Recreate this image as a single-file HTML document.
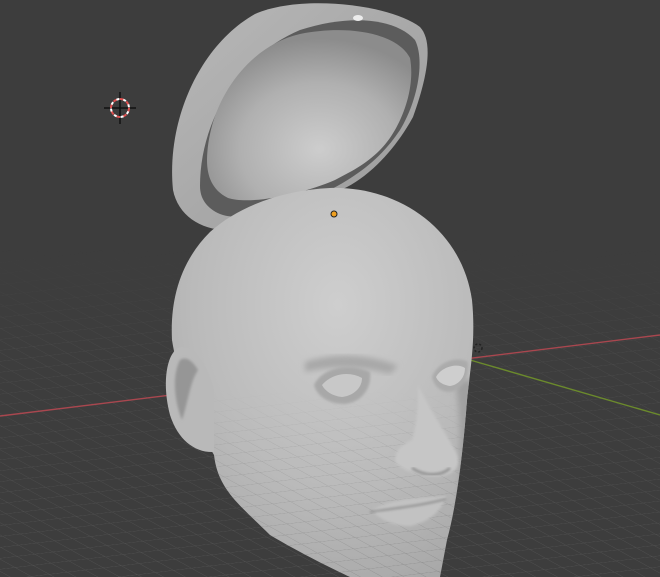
<!DOCTYPE html>
<html><head><meta charset="utf-8"><style>html,body{margin:0;padding:0;background:#3d3d3d;overflow:hidden}svg{display:block}</style></head>
<body>
<svg width="660" height="577" viewBox="0 0 660 577" xmlns="http://www.w3.org/2000/svg">
<defs>
<radialGradient id="head" cx="0.55" cy="0.3" r="0.8">
<stop offset="0" stop-color="#cecece"/><stop offset="0.6" stop-color="#bababa"/><stop offset="1" stop-color="#a6a6a6"/>
</radialGradient>
<radialGradient id="inner" cx="0.55" cy="0.7" r="0.65">
<stop offset="0" stop-color="#cdcdcd"/><stop offset="0.6" stop-color="#b0b0b0"/><stop offset="1" stop-color="#8c8c8c"/>
</radialGradient>
<linearGradient id="outer" x1="0" y1="0" x2="1" y2="1">
<stop offset="0" stop-color="#b8b8b8"/><stop offset="1" stop-color="#9a9a9a"/>
</linearGradient>
<pattern id="grid" width="18" height="18" patternUnits="userSpaceOnUse" patternTransform="matrix(1,-0.12,0.9,0.5,0,0)">
<path d="M0 0H18M0 0V18" stroke="#535353" stroke-width="1.3" fill="none"/>
</pattern>
<linearGradient id="fade" x1="0" y1="0" x2="0" y2="1">
<stop offset="0" stop-color="#fff" stop-opacity="0"/><stop offset="0.3" stop-color="#fff" stop-opacity="0.6"/><stop offset="1" stop-color="#fff" stop-opacity="1"/>
</linearGradient>
<mask id="m"><rect y="250" width="660" height="327" fill="url(#fade)"/></mask>
<mask id="m2"><rect y="390" width="660" height="187" fill="url(#fade)"/></mask>
<filter id="b2"><feGaussianBlur stdDeviation="3"/></filter>
<filter id="b1"><feGaussianBlur stdDeviation="1.2"/></filter>
<clipPath id="hc"><path d="M330 188 C400 186 462 230 472 300 C476 340 470 370 467 400 C464 440 458 500 447 540 L440 577 L350 577 C335 570 300 553 270 535 C240 505 218 490 214 455 C200 430 178 380 172 340 C170 300 180 262 210 232 C240 205 285 190 330 188Z"/></clipPath>
</defs>
<rect width="660" height="577" fill="#3d3d3d"/>
<rect y="250" width="660" height="327" fill="url(#grid)" mask="url(#m)"/>
<line x1="0" y1="416" x2="660" y2="335" stroke="#a9474f" stroke-width="1.4"/>
<line x1="470" y1="360" x2="660" y2="415" stroke="#6b8a2c" stroke-width="1.4"/>
<g transform="translate(120,108)">
<line x1="-16" y1="0" x2="16" y2="0" stroke="#111" stroke-width="1.5"/>
<line x1="0" y1="-16" x2="0" y2="16" stroke="#111" stroke-width="1.5"/>
<circle r="9" fill="none" stroke="#e05050" stroke-width="2" stroke-dasharray="4 3"/>
<circle r="9" fill="none" stroke="#fff" stroke-width="2" stroke-dasharray="3 4" stroke-dashoffset="3.5"/>
</g>
<!-- cap -->
<path d="M173 190 C166 120 200 45 255 14 C300 -6 390 4 420 27 C432 40 430 70 413 117 C395 150 370 175 347 187 C300 210 260 228 227 230 C200 230 178 215 173 190Z" fill="url(#outer)"/>
<path d="M200 186 C200 120 240 55 300 30 C350 14 395 18 415 40 C425 60 418 100 400 130 C380 160 355 178 320 195 C280 212 240 222 220 214 C206 208 200 198 200 186Z" fill="#5c5c5c"/>
<path d="M207 160 C208 100 250 45 300 34 C350 24 398 34 410 58 C416 90 400 130 380 150 C365 165 350 172 335 180 C300 195 250 205 228 198 C212 190 207 176 207 160Z" fill="url(#inner)"/>
<ellipse cx="358" cy="18" rx="5" ry="3" fill="#ececec"/>
<ellipse cx="254" cy="213" rx="6" ry="4" fill="#ececec"/>
<!-- head -->
<path d="M330 188 C400 186 462 230 472 300 C476 340 470 370 467 400 C464 440 458 500 447 540 L440 577 L350 577 C335 570 300 553 270 535 C240 505 218 490 214 455 C200 430 178 380 172 340 C170 300 180 262 210 232 C240 205 285 190 330 188Z" fill="url(#head)"/>
<g clip-path="url(#hc)">
<rect y="390" width="660" height="187" fill="url(#grid)" opacity="0.3" mask="url(#m2)"/>
<path d="M305 362 C335 352 370 354 398 366 L390 374 C360 366 332 366 305 372Z" fill="#a8a8a8" filter="url(#b2)"/>
<path d="M455 380 C462 420 462 480 450 577 L470 577 L475 380Z" fill="#a0a0a0" filter="url(#b2)"/>
</g>
<!-- ear -->
<path d="M178 348 C166 355 162 385 170 415 C178 440 195 453 214 452 L214 390 C206 360 192 343 178 348Z" fill="#b9b9b9"/>
<path d="M180 360 C172 375 174 400 182 420 C188 402 190 382 198 370 C192 360 186 356 180 360Z" fill="#969696" filter="url(#b1)"/>
<!-- eyes -->
<path d="M314 385 C322 368 348 362 370 372 C372 388 362 402 345 404 C328 404 317 396 314 385Z" fill="#a8a8a8" filter="url(#b1)"/>
<path d="M322 385 C332 373 350 371 362 378 C362 389 352 396 342 397 C332 396 325 391 322 385Z" fill="#c8c8c8"/>
<path d="M432 377 C438 361 458 356 468 362 C469 378 462 390 450 392 C440 392 434 386 432 377Z" fill="#ababab" filter="url(#b1)"/>
<path d="M436 377 C442 366 458 363 465 368 C465 378 458 385 450 386 C443 385 438 382 436 377Z" fill="#cecece"/>
<!-- nose -->
<path d="M418 385 C430 410 445 432 456 452 C462 465 455 475 440 476 C422 477 405 472 396 463 C393 452 402 444 412 440 C418 420 418 400 418 385Z" fill="#c6c6c6" filter="url(#b1)"/>
<path d="M412 468 C425 477 442 476 450 468" stroke="#8e8e8e" stroke-width="2.5" fill="none" filter="url(#b1)"/>
<!-- lips -->
<path d="M372 510 C392 498 420 498 446 496 C442 510 430 522 410 526 C394 526 380 520 372 510Z" fill="#c2c2c2" filter="url(#b1)"/>
<path d="M370 512 C395 508 420 506 446 499" stroke="#8a8a8a" stroke-width="1.8" fill="none" filter="url(#b1)"/>
<circle cx="334" cy="214" r="3" fill="#f0a020" stroke="#222" stroke-width="1"/>
<circle cx="478" cy="348" r="4" fill="none" stroke="#222" stroke-width="1.5" stroke-dasharray="2 2"/>
</svg>
</body></html>
